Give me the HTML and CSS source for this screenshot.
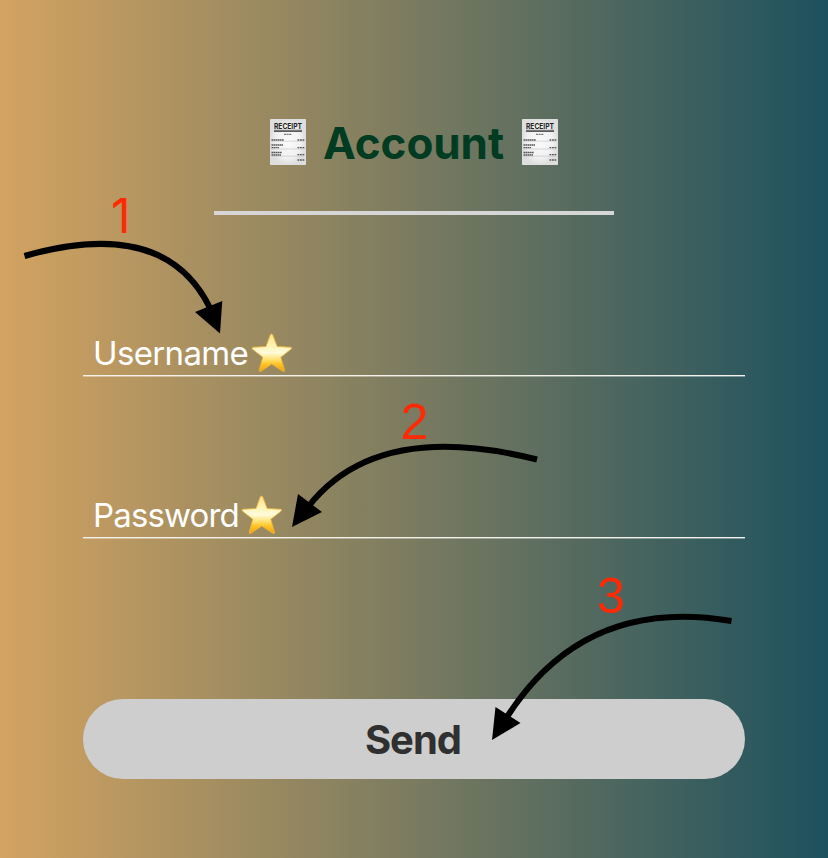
FILE: index.html
```
<!DOCTYPE html>
<html lang="en">
<head>
<meta charset="utf-8">
<title>Account</title>
<link rel="stylesheet" href="styles.css">
</head>
<body>
<svg class="defs" aria-hidden="true">
  <defs>
    <linearGradient id="gold" x1="0" y1="0" x2="0" y2="1">
      <stop offset="0" stop-color="#ffe08a"/>
      <stop offset=".3" stop-color="#fff3b4"/>
      <stop offset=".5" stop-color="#fffbdc"/>
      <stop offset=".68" stop-color="#ffe070"/>
      <stop offset=".8" stop-color="#ffc425"/>
      <stop offset="1" stop-color="#f0a010"/>
    </linearGradient>
    <radialGradient id="paper">
      <stop offset="0" stop-color="#fafafa"/>
      <stop offset=".7" stop-color="#f1f1f1"/>
      <stop offset="1" stop-color="#dedede"/>
    </radialGradient>
    <symbol id="star" viewBox="0 0 42 40">
      <path d="M20.5 1 Q21.5 1 22 2.5 L26.2 13.5 L39.5 14.2 Q41.5 14.7 40 16.2 L29.8 24.3 L33.5 37 Q33.7 39.2 31.7 38.2 L20.8 31 L10 38.2 Q8 39.2 8.2 37 L11.8 24.3 L1.5 16.2 Q0 14.7 2 14.2 L15 13.5 L19 2.5 Q19.5 1 20.5 1Z" fill="url(#gold)" stroke="#e9b23c" stroke-width=".9"/>
    </symbol>
    <symbol id="receipt" viewBox="0 0 36 46">
      <rect width="36" height="46" rx=".7" fill="url(#paper)"/>
      <text class="r-title" x="18" y="9.6" text-anchor="middle" textLength="28" lengthAdjust="spacingAndGlyphs">RECEIPT</text>
      <path d="M4 11.3H32M4 12.5H32" stroke="#333" stroke-width=".8"/>
      <path d="M14 15.3H22" stroke="#777" stroke-width="1.3" stroke-dasharray="2 .6"/>
      <path d="M1.5 21H14M1.5 26H13M1.5 28.6H9M1.5 33.5H12M1.5 36H11" stroke="#555" stroke-width="1.3" stroke-dasharray="1.7 .4"/>
      <path d="M27.5 21H34.5M27.5 28.6H34.5M27.5 35.6H34.5M27.5 41H34.5" stroke="#555" stroke-width="1.4" stroke-dasharray="1.8 .7"/>
      <path d="M1.5 22.2H34.5M1.5 30H34.5M1.5 37.2H34.5" stroke="#aaa" stroke-width=".4"/>
    </symbol>
  </defs>
</svg>
<main class="account">
  <h1 class="heading">
    <svg class="receipt" aria-hidden="true"><use href="#receipt"/></svg>
    <span class="heading-text">Account</span>
    <svg class="receipt" aria-hidden="true"><use href="#receipt"/></svg>
  </h1>
  <div class="rule"></div>
  <form class="form">
    <label class="field"><span class="label username">Username</span><svg class="star" aria-hidden="true"><use href="#star"/></svg></label>
    <label class="field"><span class="label password">Password</span><svg class="star" aria-hidden="true"><use href="#star"/></svg></label>
    <button class="send" type="button">Send</button>
  </form>
</main>
<svg class="notes" viewBox="0 0 828 858">
  <g class="arrows">
    <path d="M24.5 256Q165 216 210 308"/>
    <path d="M537 459.5Q376 419 308 507"/>
    <path d="M731.5 621Q584 596 507 717"/>
  </g>
  <path d="M195 312L222.3 301L220 333.5ZM298 494L322 512L292 527ZM495.5 707L520.5 723L492 740Z"/>
  <g class="numbers">
    <text class="one" x="111" y="233">1</text>
    <text x="400.5" y="439">2</text>
    <text x="597" y="613">3</text>
  </g>
</svg>
</body>
</html>
```

FILE: styles.css
```
* {
  box-sizing: border-box;
}

body {
  margin: 0;
  height: 858px;
  overflow: hidden;
  font-family: Inter, "Liberation Sans", sans-serif;
  background: linear-gradient(90deg, #d3a361, #7a7b60 50%, #1d515e);
}

.defs {
  position: absolute;
  width: 0;
  height: 0;
}

.account {
  width: 662px;
  margin: 0 auto;
  padding-top: 116px;
}

.heading {
  display: flex;
  justify-content: center;
  align-items: center;
  gap: 17px;
  height: 53px;
  margin: 0;
  color: #003b22;
  font-size: 44px;
  font-weight: 700;
  line-height: 53px;
}

.heading-text {
  width: 182px;
  padding: 2px 1px 0 0;
  text-align: center;
  white-space: nowrap;
  letter-spacing: -0.1px;
}

.receipt {
  width: 36px;
  height: 46px;
  margin-bottom: 1px;
}

.r-title {
  font-size: 7.4px;
  font-weight: 700;
  fill: #222;
}

.rule {
  width: 400px;
  height: 4px;
  margin: 42px auto 0;
  background: #d6d6d6;
}

.form {
  display: flex;
  flex-direction: column;
  margin-top: 112px;
}

.field {
  display: flex;
  align-items: center;
  height: 49px;
  margin-bottom: 113px;
  padding: 4px 0 0 10px;
  border-bottom: 1px solid #f4f1ea;
  box-shadow: 0 1px 0 #ffffff60;
  color: #fff;
  font-size: 33px;
  font-weight: 400;
}

.label {
  white-space: nowrap;
}

.username {
  width: 155px;
  letter-spacing: -0.65px;
}

.password {
  width: 145px;
  letter-spacing: -0.85px;
}

.star {
  width: 42px;
  height: 40px;
  margin-left: 3px;
}

.send {
  height: 80px;
  margin-top: 48px;
  padding: 1px 2px 0 0;
  border: 0;
  border-radius: 40px;
  background: #cecece;
  color: #303030;
  font: 700 40px Inter, "Liberation Sans", sans-serif;
  letter-spacing: -1px;
}

.notes {
  position: absolute;
  top: 0;
  left: 0;
  width: 828px;
  height: 858px;
  pointer-events: none;
}

.arrows {
  fill: none;
  stroke: #000;
  stroke-width: 6;
}

.numbers {
  fill: #ff2a05;
  font: 50px "Liberation Sans", sans-serif;
}

.one {
  font: 400 48px Inter, sans-serif;
}
```
